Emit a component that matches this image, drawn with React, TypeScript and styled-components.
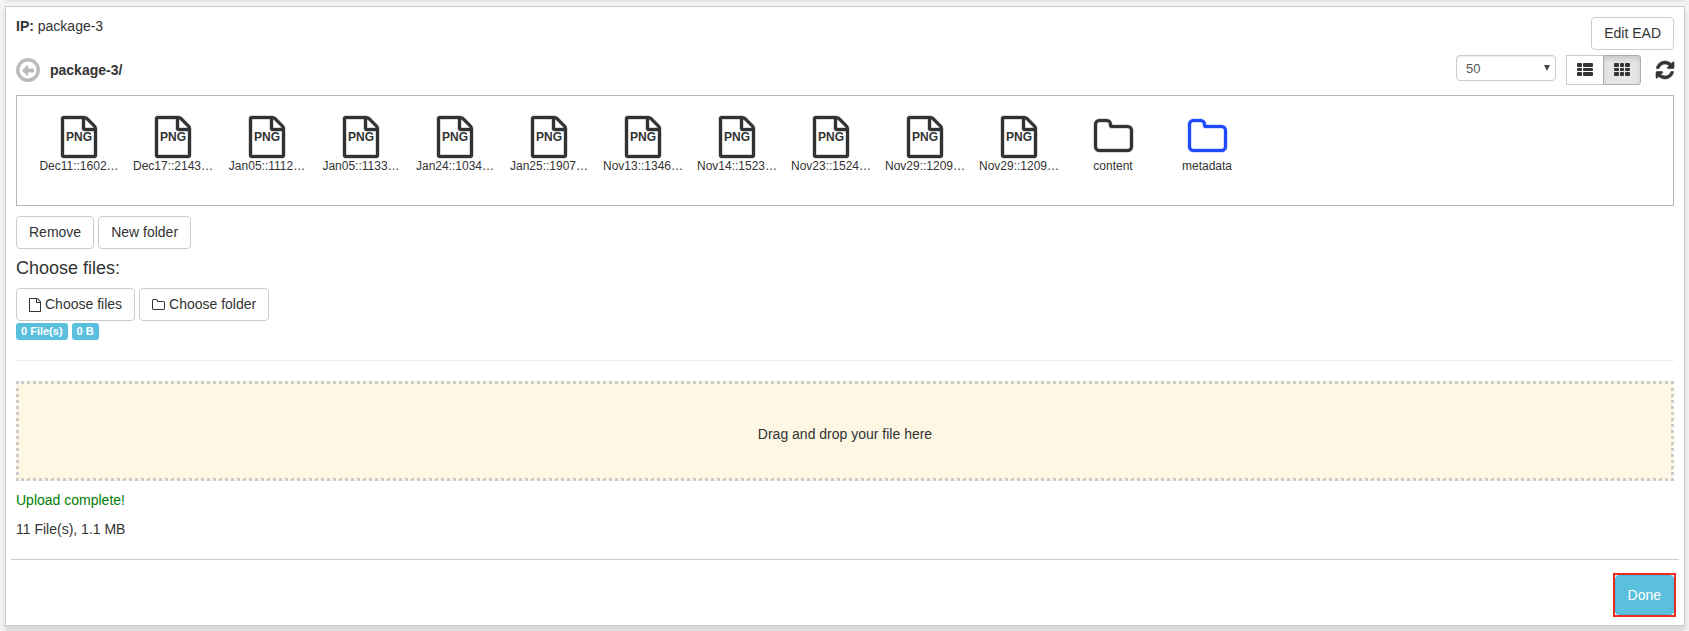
import React from "react";
import styled, { createGlobalStyle, css } from "styled-components";

const GlobalStyle = createGlobalStyle`
  *, *::before, *::after { box-sizing: border-box; }
  body {
    margin: 0;
    background: #f3f3f3;
    color: #333;
    font: 14px/19px "Liberation Sans", Arial, sans-serif;
  }
  button, select { font-family: inherit; }
`;

const Page = styled.div`
  padding: 0 4px 5px 5px;
`;

const PreviousPanelEdge = styled.div`
  height: 6px;
  background: linear-gradient(#e2e2e2, #f3f3f3 3px);
`;

const Panel = styled.main`
  background: #fff;
  border: 1px solid #ccc;
  box-shadow: 0 5px 5px rgba(0, 0, 0, 0.12);
`;

const PanelBody = styled.div`
  padding: 10px;
`;

const Header = styled.header`
  display: flex;
  justify-content: space-between;
  align-items: flex-start;
  margin-bottom: 5px;
`;

const Title = styled.div``;

const buttonBase = css`
  border: 1px solid #ccc;
  background: #fff;
  color: #333;
  font-size: 14px;
  line-height: 19px;
  cursor: pointer;
`;

const Button = styled.button`
  ${buttonBase}
  padding: 6px 12px;
  border-radius: 4px;
  white-space: nowrap;
`;

const Toolbar = styled.div`
  display: flex;
  justify-content: space-between;
  align-items: flex-start;
  height: 30px;
  margin-bottom: 10px;
`;

const Breadcrumb = styled.div`
  display: flex;
  align-items: center;
  gap: 10px;
  height: 30px;
  font-weight: bold;
  line-height: 20px;
`;

const IconButton = styled.button<{ $color?: string }>`
  display: flex;
  padding: 0;
  border: 0;
  background: none;
  color: ${(p) => p.$color ?? "#333"};
  cursor: pointer;
`;

const ViewControls = styled.div`
  display: flex;
  align-items: flex-start;
  gap: 10px;
`;

const SelectWrap = styled.div`
  position: relative;
  color: #555;
`;

const PageSize = styled.select`
  appearance: none;
  display: block;
  width: 100px;
  height: 26px;
  padding: 0 9px;
  border: 1px solid #ccc;
  border-radius: 4px;
  background: #fff;
  box-shadow: inset 0 1px 1px rgba(0, 0, 0, 0.075);
  color: #555;
  font-size: 13px;
`;

const SelectArrow = styled.svg`
  position: absolute;
  right: 6px;
  top: 10px;
  fill: #444;
  pointer-events: none;
`;

const ToggleGroup = styled.div`
  display: flex;
`;

const Toggle = styled.button<{ $active?: boolean }>`
  ${buttonBase}
  display: flex;
  align-items: center;
  justify-content: center;
  width: 38px;
  height: 30px;
  padding: 0 0 2px;
  & + & {
    margin-left: -1px;
    border-radius: 0 3px 3px 0;
  }
  ${(p) =>
    p.$active &&
    css`
      background: #e6e6e6;
      border-color: #adadad;
      box-shadow: inset 0 3px 5px rgba(0, 0, 0, 0.125);
    `}
`;

const RefreshSlot = styled.div`
  display: flex;
  align-items: center;
  height: 30px;
  padding-left: 5px;
`;

const FileBox = styled.ul`
  display: flex;
  flex-wrap: wrap;
  min-height: 111px;
  margin: 0 0 10px;
  padding: 20px 15px;
  border: 1px solid #b5b5b5;
  list-style: none;
`;

const FileItem = styled.li`
  display: flex;
  flex-direction: column;
  align-items: center;
  width: 94px;
`;

const FileIcon = styled.div<{ $color?: string }>`
  display: grid;
  place-items: center;
  height: 42px;
  color: ${(p) => p.$color ?? "#333"};
  > * { grid-area: 1 / 1; }
`;

const FileType = styled.span`
  font-size: 12px;
  line-height: 16px;
  font-weight: bold;
`;

const FileName = styled.span`
  font-size: 12px;
  line-height: 16px;
  white-space: nowrap;
`;

const ButtonRow = styled.div`
  display: flex;
  gap: 4px;
`;

const Heading = styled.h4`
  margin: 9px 0 10px;
  font-size: 18px;
  line-height: 20px;
  font-weight: normal;
`;

const UploadButton = styled(Button)`
  display: flex;
  align-items: center;
  gap: 4px;
`;

const Badges = styled.div`
  display: flex;
  gap: 4px;
  margin-top: 2px;
`;

const Badge = styled.span`
  padding: 2px 5px 3px;
  border-radius: 3px;
  background: #5bc0de;
  color: #fff;
  font-size: 11px;
  line-height: 12px;
  font-weight: bold;
`;

const Rule = styled.hr`
  margin: 20px 0;
  border: 0;
  border-top: 1px solid #eee;
`;

const DropZone = styled.div`
  display: flex;
  align-items: center;
  justify-content: center;
  height: 100px;
  padding-top: 6px;
  border: 3px dotted #ccc;
  background: #fdf7e3;
  line-height: 20px;
`;

const Status = styled.p<{ $color?: string }>`
  margin: 10px 0 0;
  color: ${(p) => p.$color ?? "#333"};
`;

const Footer = styled.footer`
  display: flex;
  justify-content: flex-end;
  margin: 10px 5px 0;
  padding: 13px 3px 8px;
  border-top: 1px solid #ccc;
`;

const Highlight = styled.div`
  border: 2px solid #ee2a24;
`;

const DoneButton = styled.button`
  display: block;
  height: 40px;
  padding: 0 12px;
  border: 1px solid #46b8da;
  border-radius: 4px;
  background: #5bc0de;
  color: #fff;
  font-size: 14px;
  line-height: 20px;
  cursor: pointer;
`;

const paths = {
  file: "M1468 380q28 28 48 76t20 88v1152q0 40-28 68t-68 28h-1344q-40 0-68-28t-28-68v-1600q0-40 28-68t68-28h896q40 0 88 20t76 48zm-444-244v376h376q-10-29-22-41l-313-313q-12-12-41-22zm384 1528v-1024h-416q-40 0-68-28t-28-68v-416h-768v1536h1280z",
  folder:
    "M1536 1312v-704q0-40-28-68t-68-28h-704q-40 0-68-28t-28-68v-64q0-40-28-68t-68-28h-320q-40 0-68 28t-28 68v960q0 40 28 68t68 28h1216q40 0 68-28t28-68zm128-704v704q0 92-66 158t-158 66h-1216q-92 0-158-66t-66-158v-960q0-92 66-158t158-66h320q92 0 158 66t66 158v32h672q92 0 158 66t66 158z",
  back: "M1152 832v192q0 13-9.5 22.5t-22.5 9.5h-352v192q0 14-9 23t-23 9q-12 0-24-10l-319-319q-9-9-9-23t9-23l320-320q9-9 23-9 13 0 22.5 9.5t9.5 22.5v192h352q13 0 22.5 9.5t9.5 22.5zm160 64q0-148-73-273t-198-198-273-73-273 73-198 198-73 273 73 273 198 198 273 73 273-73 198-198 73-273zm224 0q0 209-103 385.5t-279.5 279.5-385.5 103-385.5-103-279.5-279.5-103-385.5 103-385.5 279.5-279.5 385.5-103 385.5 103 279.5 279.5 103 385.5z",
  refresh:
    "M1511 1056q0 5-1 7-64 268-268 434.5t-478 166.5q-146 0-282.5-55t-243.5-157l-129 129q-19 19-45 19t-45-19-19-45v-448q0-26 19-45t45-19h448q26 0 45 19t19 45-19 45l-137 137q71 66 161 102t187 36q134 0 250-65t186-179q11-17 53-117 8-23 30-23h192q13 0 22.5 9.5t9.5 22.5zm25-800v448q0 26-19 45t-45 19h-448q-26 0-45-19t-19-45 19-45l138-138q-148-137-349-137-134 0-250 65t-186 179q-11 17-53 117-8 23-30 23h-199q-13 0-22.5-9.5t-9.5-22.5v-7q65-268 270-434.5t480-166.5q146 0 284 55.5t245 156.5l130-129q19-19 45-19t45 19 19 45z",
};

type GlyphProps = {
  name: keyof typeof paths;
  units?: number;
  top?: number;
  tall?: number;
  width: number;
  height: number;
  weight?: number;
};

function Glyph({ name, units = 1536, top = 0, tall = 1792, width, height, weight = 0 }: GlyphProps) {
  return (
    <svg
      width={width}
      height={height}
      viewBox={`0 ${top} ${units} ${tall}`}
      fill="currentColor"
      stroke="currentColor"
      strokeWidth={weight}
      overflow="visible"
      aria-hidden="true"
    >
      <path d={paths[name]} />
    </svg>
  );
}

function GridGlyph({ list }: { list?: boolean }) {
  const columns = list ? [[0, 5], [6, 10]] : [[0, 5], [6, 4], [11, 5]];
  return (
    <svg width="16" height="13" viewBox="0 0 16 13" fill="#333" aria-hidden="true">
      {[0, 5, 9].map((y, row) =>
        columns.map(([x, w]) => <rect key={`${x}-${y}`} x={x} y={y} width={w} height={row === 1 ? 3 : 4} rx="1" />),
      )}
    </svg>
  );
}

const files = [
  "Dec11::1602…",
  "Dec17::2143…",
  "Jan05::1112…",
  "Jan05::1133…",
  "Jan24::1034…",
  "Jan25::1907…",
  "Nov13::1346…",
  "Nov14::1523…",
  "Nov23::1524…",
  "Nov29::1209…",
  "Nov29::1209…",
];

const folders = [
  { name: "content", color: "#333" },
  { name: "metadata", color: "#1f4bff" },
];

export default function App() {
  return (
    <>
      <GlobalStyle />
      <Page>
        <PreviousPanelEdge />
        <Panel>
          <PanelBody>
            <Header>
              <Title>
                <b>IP:</b> package-3
              </Title>
              <Button>Edit EAD</Button>
            </Header>
            <Toolbar>
              <Breadcrumb>
                <IconButton $color="#bbb" aria-label="Back">
                  <Glyph name="back" top={128} tall={1536} width={24} height={24} />
                </IconButton>
                package-3/
              </Breadcrumb>
              <ViewControls>
                <SelectWrap>
                  <PageSize aria-label="Items per page" defaultValue="50">
                    <option>10</option>
                    <option>50</option>
                    <option>100</option>
                  </PageSize>
                  <SelectArrow width="6" height="6" viewBox="0 0 6 6" aria-hidden="true">
                    <path d="M0 0h6L3 6z" />
                  </SelectArrow>
                </SelectWrap>
                <ToggleGroup>
                  <Toggle aria-label="List view">
                    <GridGlyph list />
                  </Toggle>
                  <Toggle $active aria-label="Grid view" aria-pressed="true">
                    <GridGlyph />
                  </Toggle>
                </ToggleGroup>
                <RefreshSlot>
                  <IconButton aria-label="Refresh">
                    <Glyph name="refresh" top={128} tall={1536} width={18} height={18} weight={50} />
                  </IconButton>
                </RefreshSlot>
              </ViewControls>
            </Toolbar>
            <FileBox>
              {files.map((name, i) => (
                <FileItem key={i}>
                  <FileIcon>
                    <Glyph name="file" width={36} height={42} weight={16} />
                    <FileType>PNG</FileType>
                  </FileIcon>
                  <FileName>{name}</FileName>
                </FileItem>
              ))}
              {folders.map(({ name, color }) => (
                <FileItem key={name}>
                  <FileIcon $color={color}>
                    <Glyph name="folder" units={1664} width={39} height={42} weight={16} />
                  </FileIcon>
                  <FileName>{name}</FileName>
                </FileItem>
              ))}
            </FileBox>
            <ButtonRow>
              <Button>Remove</Button>
              <Button>New folder</Button>
            </ButtonRow>
            <Heading>Choose files:</Heading>
            <ButtonRow>
              <UploadButton>
                <Glyph name="file" width={12} height={14} />
                Choose files
              </UploadButton>
              <UploadButton>
                <Glyph name="folder" units={1664} width={13} height={14} />
                Choose folder
              </UploadButton>
            </ButtonRow>
            <Badges>
              <Badge>0 File(s)</Badge>
              <Badge>0 B</Badge>
            </Badges>
            <Rule />
            <DropZone>Drag and drop your file here</DropZone>
            <Status $color="#008000">Upload complete!</Status>
            <Status>11 File(s), 1.1 MB</Status>
          </PanelBody>
          <Footer>
            <Highlight>
              <DoneButton>Done</DoneButton>
            </Highlight>
          </Footer>
        </Panel>
      </Page>
    </>
  );
}
